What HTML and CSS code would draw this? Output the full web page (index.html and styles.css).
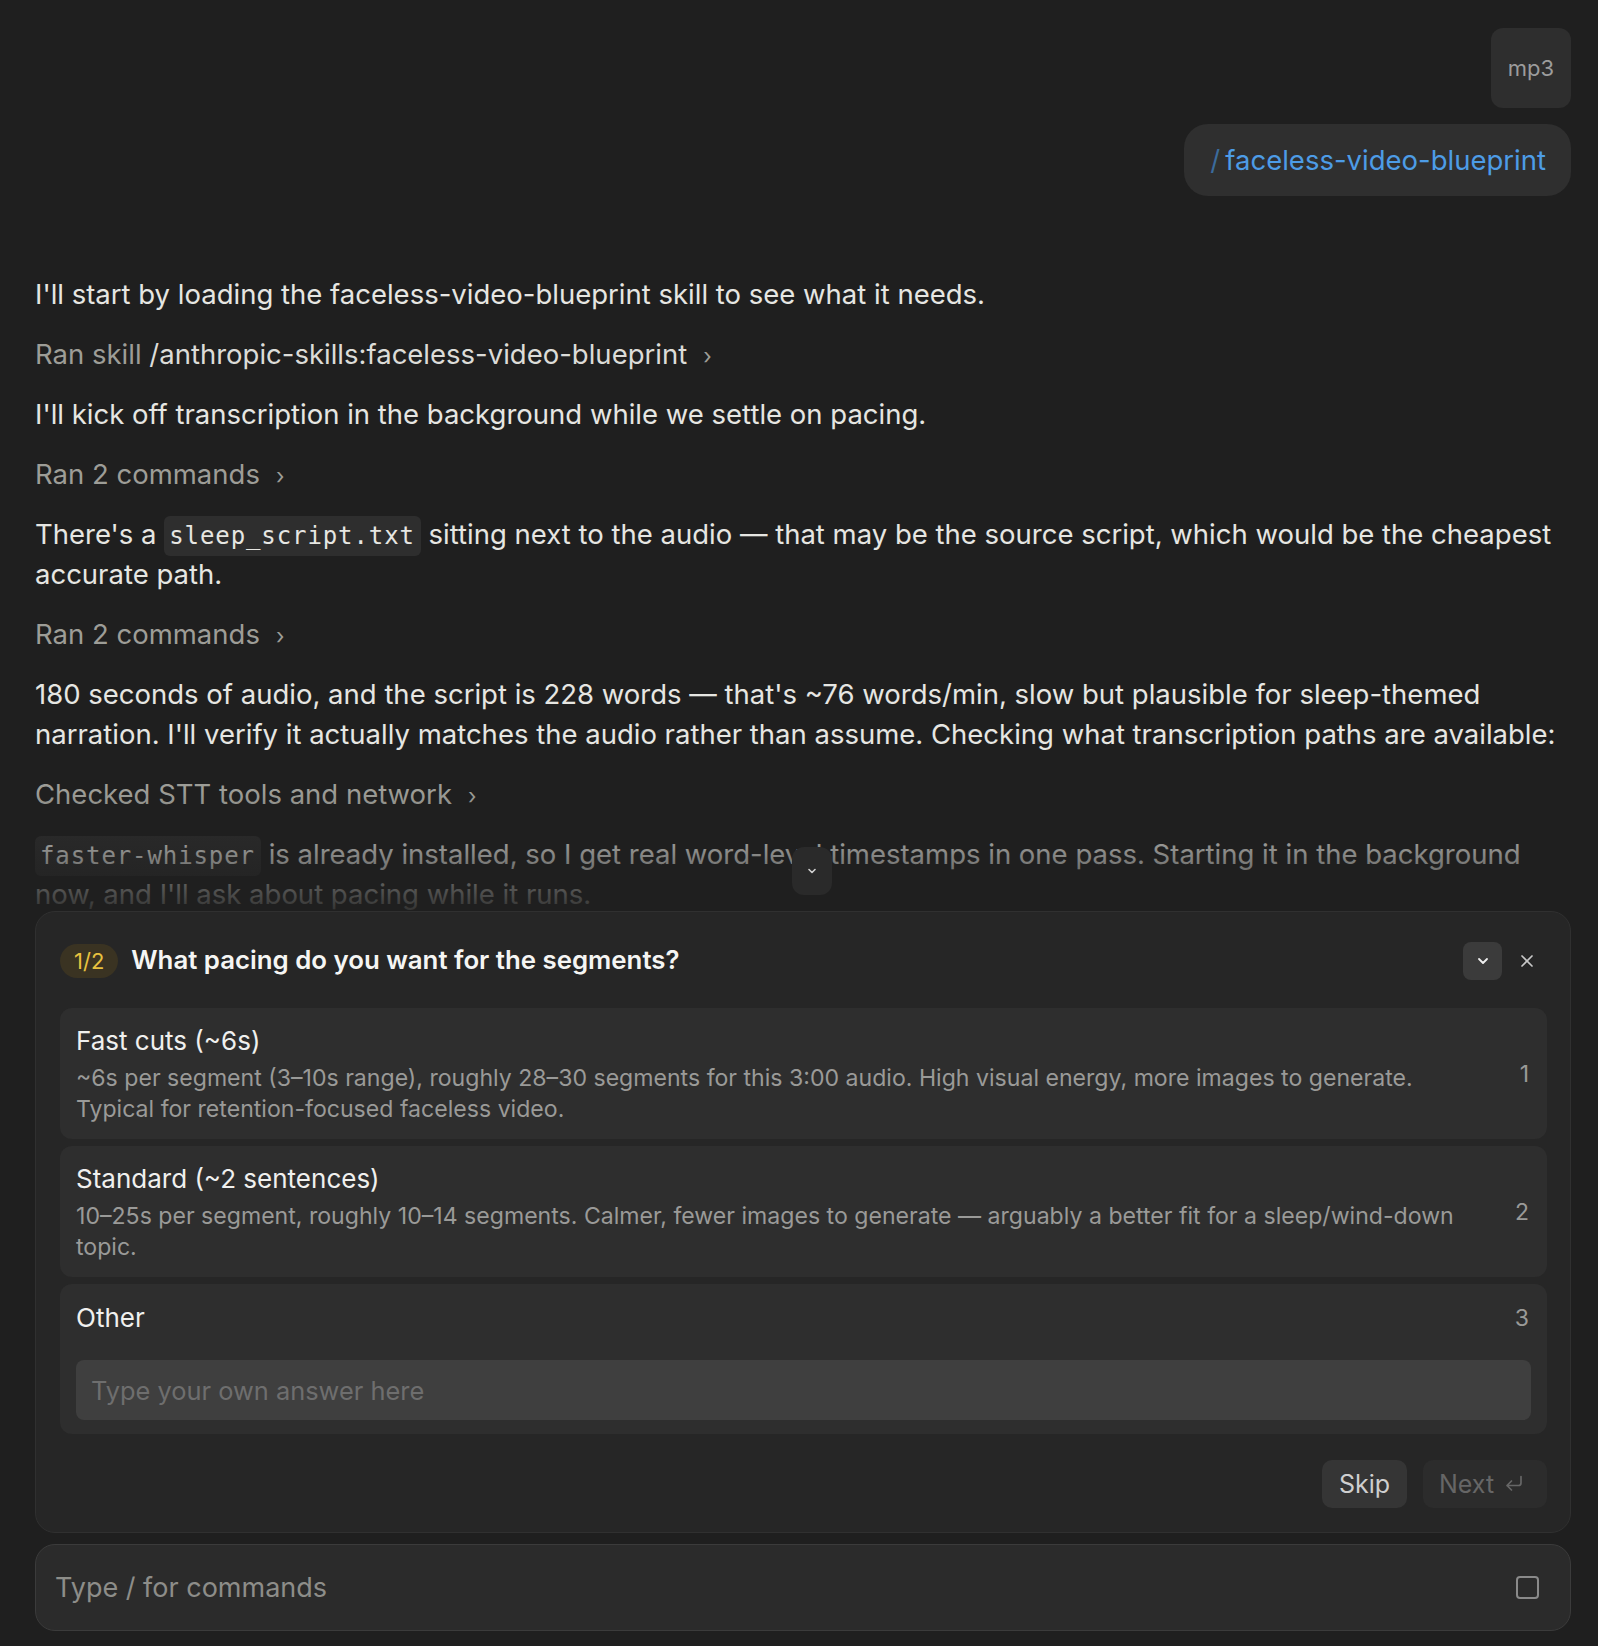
FILE: index.html
```html
<!DOCTYPE html>
<html lang="en">
<head>
    <meta charset="UTF-8">
    <meta name="viewport" content="width=device-width, initial-scale=1.0">
    <title>Faceless video blueprint</title>
    <link rel="stylesheet" href="styles.css">
</head>
<body>
    <div class="app">
        <div class="thread">
            <div class="user-row">
                <div class="attachment">mp3</div>
            </div>
            <div class="user-row">
                <div class="command-pill"><span class="slash">/</span>faceless-video-blueprint</div>
            </div>

            <div class="messages">
                <p class="msg">I'll start by loading the faceless-video-blueprint skill to see what it needs.</p>
                <p class="tool">Ran skill <span class="tool-arg">/anthropic-skills:faceless-video-blueprint</span><span class="chev">›</span></p>
                <p class="msg">I'll kick off transcription in the background while we settle on pacing.</p>
                <p class="tool">Ran 2 commands<span class="chev">›</span></p>
                <p class="msg">There's a <code>sleep_script.txt</code> sitting next to the audio — that may be the source script, which would be the cheapest accurate path.</p>
                <p class="tool">Ran 2 commands<span class="chev">›</span></p>
                <p class="msg">180 seconds of audio, and the script is 228 words — that's ~76 words/min, slow but plausible for sleep-themed narration. I'll verify it actually matches the audio rather than assume. Checking what transcription paths are available:</p>
                <p class="tool">Checked STT tools and network<span class="chev">›</span></p>
                <p class="msg"><code>faster-whisper</code> is already installed, so I get real word-level timestamps in one pass. Starting it in the background now, and I'll ask about pacing while it runs.</p>
            </div>

            <div class="fade"></div>
            <button class="scroll-down">
                <svg width="14" height="14" viewBox="0 0 14 14"><path d="M4 5.5l3 3 3-3" fill="none" stroke="#d0d0d0" stroke-width="1.6" stroke-linecap="round" stroke-linejoin="round"/></svg>
            </button>
        </div>

        <div class="question-card">
            <div class="q-header">
                <span class="q-step">1/2</span>
                <span class="q-title">What pacing do you want for the segments?</span>
                <button class="q-collapse">
                    <svg width="18" height="18" viewBox="0 0 18 18"><path d="M5 7l4 4 4-4" fill="none" stroke="#f0f0f0" stroke-width="1.8" stroke-linecap="round" stroke-linejoin="round"/></svg>
                </button>
                <button class="q-close">
                    <svg width="16" height="16" viewBox="0 0 16 16"><path d="M3 3l10 10M13 3L3 13" fill="none" stroke="#c8c8c8" stroke-width="1.7" stroke-linecap="round"/></svg>
                </button>
            </div>

            <div class="options">
                <div class="option">
                    <div class="option-text">
                        <div class="option-title">Fast cuts (~6s)</div>
                        <div class="option-desc">~6s per segment (3–10s range), roughly 28–30 segments for this 3:00 audio. High visual energy, more images to generate. Typical for retention-focused faceless video.</div>
                    </div>
                    <span class="option-key">1</span>
                </div>
                <div class="option">
                    <div class="option-text">
                        <div class="option-title">Standard (~2 sentences)</div>
                        <div class="option-desc">10–25s per segment, roughly 10–14 segments. Calmer, fewer images to generate — arguably a better fit for a sleep/wind-down topic.</div>
                    </div>
                    <span class="option-key">2</span>
                </div>
                <div class="option option-other">
                    <div class="other-row">
                        <div class="option-title">Other</div>
                        <span class="option-key">3</span>
                    </div>
                    <input class="other-input" type="text" placeholder="Type your own answer here">
                </div>
            </div>

            <div class="q-actions">
                <button class="btn-skip">Skip</button>
                <button class="btn-next">Next
                    <svg width="24" height="24" viewBox="0 0 24 24"><path d="M19 4.5v6.5a2.5 2.5 0 0 1-2.5 2.5H5M9.5 9l-4.5 4.5 4.5 4.5" fill="none" stroke="#666" stroke-width="1.7" stroke-linecap="round" stroke-linejoin="round"/></svg>
                </button>
            </div>
        </div>

        <div class="composer">
            <span class="composer-placeholder">Type / for commands</span>
            <span class="stop-icon"></span>
        </div>
    </div>
</body>
</html>
```

FILE: styles.css
```css
body {
    margin: 0;
    background: #1f1f1f;
    font-family: Inter, "Noto Sans", sans-serif;
    color: #e6e6e2;
}

.app {
    height: 100vh;
    display: flex;
    flex-direction: column;
}

.thread {
    flex: 1;
    position: relative;
    overflow: hidden;
    padding: 28px 27px 0 35px;
}

.user-row {
    display: flex;
    justify-content: flex-end;
}

.attachment {
    width: 80px;
    height: 80px;
    border-radius: 12px;
    background: #2e2e2e;
    color: #9c9c9c;
    font-size: 22px;
    display: flex;
    align-items: center;
    justify-content: center;
}

.command-pill {
    margin-top: 16px;
    height: 72px;
    padding: 0 25px 0 26px;
    border-radius: 24px;
    background: #2f2f2f;
    color: #4d9ce6;
    font-size: 27.5px;
    display: flex;
    align-items: center;
}

.slash {
    color: #3b6b9c;
    margin-right: 5px;
}

.messages {
    margin-top: 78px;
    font-size: 27.5px;
    line-height: 40px;
}

.messages p {
    margin: 0 0 20px;
}

.tool {
    color: #9d9d97;
}

.tool-arg {
    color: #dcdcd8;
}

.chev {
    margin-left: 16px;
    font-size: 22px;
    line-height: 1;
    color: #9d9d97;
}

code {
    font-family: "DejaVu Sans Mono", "Liberation Mono", monospace;
    font-size: 24px;
    letter-spacing: 0.9px;
    line-height: 1;
    background: #2e2e2e;
    border-radius: 6px;
    padding: 6px 6px 6px 5px;
}

.fade {
    position: absolute;
    left: 0;
    right: 0;
    bottom: 0;
    height: 120px;
    background: linear-gradient(to bottom, rgba(31, 31, 31, 0), rgba(31, 31, 31, 0.9));
}

.scroll-down {
    position: absolute;
    left: 792px;
    bottom: 16px;
    width: 40px;
    height: 48px;
    border: none;
    border-radius: 12px;
    background: #2a2a2a;
    display: flex;
    align-items: center;
    justify-content: center;
    padding: 0;
}

.question-card {
    margin: 0 27px 0 35px;
    border: 1px solid #303030;
    border-radius: 20px;
    background: #262626;
    padding: 30px 23px 24px 24px;
}

.q-header {
    height: 38px;
    display: flex;
    align-items: center;
}

.q-step {
    height: 34px;
    padding: 0 14px;
    border-radius: 17px;
    background: #3a3322;
    color: #e8c13f;
    font-size: 22px;
    display: flex;
    align-items: center;
}

.q-title {
    flex: 1;
    margin-left: 13px;
    margin-bottom: 3px;
    font-size: 25.8px;
    font-weight: 600;
    color: #f5f5f3;
}

.q-collapse {
    width: 39px;
    height: 38px;
    border: none;
    border-radius: 8px;
    background: #3b3b3b;
    display: flex;
    align-items: center;
    justify-content: center;
    padding: 0;
}

.q-close {
    width: 40px;
    height: 38px;
    margin-left: 5px;
    border: none;
    background: none;
    display: flex;
    align-items: center;
    justify-content: center;
    padding: 0;
}

.options {
    margin-top: 28px;
    display: flex;
    flex-direction: column;
    gap: 7px;
}

.option {
    background: #2e2e2e;
    border-radius: 12px;
    padding: 15px 18px 14px 16px;
    display: flex;
    align-items: center;
    gap: 30px;
}

.option-text {
    flex: 1;
}

.option-title {
    font-size: 26px;
    line-height: 36px;
    color: #f0f0ee;
}

.option-desc {
    margin-top: 4px;
    font-size: 23.1px;
    line-height: 31px;
    color: #9a9a98;
}

.option-key {
    font-size: 23px;
    color: #9a9a98;
}

.option-other {
    flex-direction: column;
    align-items: stretch;
    gap: 24px;
    padding: 16px 16px 14px 16px;
}

.other-row {
    display: flex;
    justify-content: space-between;
    align-items: center;
    padding-right: 2px;
}

.other-input {
    height: 60px;
    box-sizing: border-box;
    border: none;
    border-radius: 8px;
    background: #3f3f3f;
    padding: 0 15px;
    font-family: inherit;
    font-size: 25.4px;
    color: #e4e4e0;
    outline: none;
}

.other-input::placeholder {
    color: #6e6e6e;
}

.q-actions {
    margin-top: 26px;
    display: flex;
    justify-content: flex-end;
    gap: 16px;
}

.q-actions button {
    height: 48px;
    border: none;
    border-radius: 10px;
    font-family: inherit;
    font-size: 25px;
    display: flex;
    align-items: center;
    gap: 8px;
}

.btn-skip {
    width: 85px;
    justify-content: center;
    background: #353535;
    color: #cfcfcf;
}

.btn-next {
    width: 124px;
    padding: 0 14px 0 16px;
    background: #2c2c2c;
    color: #666;
}

.composer {
    margin: 11px 27px 15px 35px;
    height: 87px;
    box-sizing: border-box;
    border: 1px solid #3b3b3b;
    border-radius: 20px;
    background: #2b2b2b;
    padding: 0 31px 0 19px;
    display: flex;
    align-items: center;
    justify-content: space-between;
}

.composer-placeholder {
    font-size: 27px;
    color: #8d8d89;
}

.stop-icon {
    width: 19px;
    height: 19px;
    border: 2px solid #8a8a8a;
    border-radius: 4px;
}
```
